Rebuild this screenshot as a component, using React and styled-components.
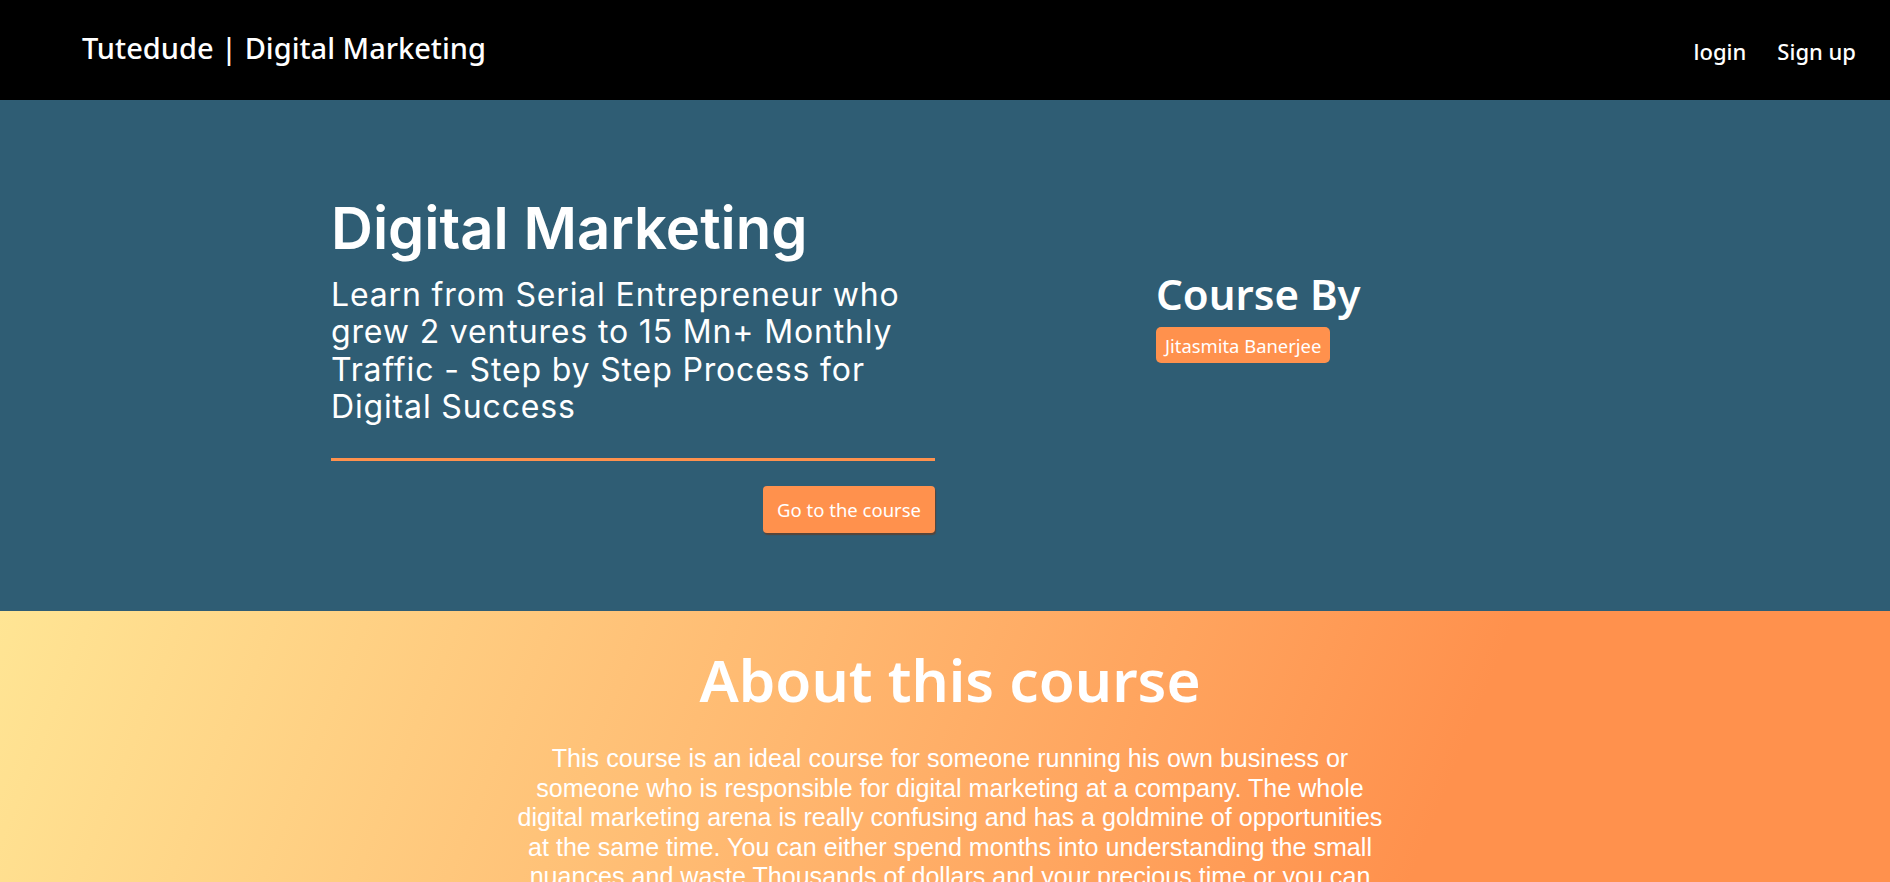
import styled, { createGlobalStyle } from "styled-components";

const GlobalStyle = createGlobalStyle`
  body {
    margin: 0;
    font-family: "Noto Sans", sans-serif;
  }
`;

const orange = "#ff914d";

export default function App() {
  return (
    <>
      <GlobalStyle />
      <Nav>
        <Brand>Tutedude | Digital Marketing</Brand>
        <Links>
          <NavLink href="#">login</NavLink>
          <NavLink href="#">Sign up</NavLink>
        </Links>
      </Nav>

      <Hero>
        <Intro>
          <Title>Digital Marketing</Title>
          <Lead>
            Learn from Serial Entrepreneur who grew 2 ventures to 15 Mn+
            Monthly Traffic - Step by Step Process for Digital Success
          </Lead>
          <Divider />
          <Actions>
            <CourseButton>Go to the course</CourseButton>
          </Actions>
        </Intro>

        <Author>
          <AuthorTitle>Course By</AuthorTitle>
          <Badge>Jitasmita Banerjee</Badge>
        </Author>
      </Hero>

      <About>
        <AboutTitle>About this course</AboutTitle>
        <AboutText>
          This course is an ideal course for someone running his own business
          or someone who is responsible for digital marketing at a company. The
          whole digital marketing arena is really confusing and has a goldmine
          of opportunities at the same time. You can either spend months into
          understanding the small nuances and waste Thousands of dollars and
          your precious time or you can learn from someone who has already done
          it and grown multiple ventures with a proven step by step process.
        </AboutText>
      </About>
    </>
  );
}

const Nav = styled.nav`
  background: #000000;
  height: 100px;
  box-sizing: border-box;
  padding: 0 34px 0 82px;
  display: flex;
  align-items: center;
  justify-content: space-between;
`;

const Brand = styled.div`
  color: #ffffff;
  font-family: "Noto Sans", sans-serif;
  font-weight: 500;
  font-size: 29px;
  margin-bottom: 6px;
`;

const Links = styled.div`
  display: flex;
  gap: 31px;
  margin-top: 2px;
`;

const NavLink = styled.a`
  color: #ffffff;
  text-decoration: none;
  font-weight: 500;
  font-size: 22px;
`;

const Hero = styled.section`
  background: #2f5d74;
  height: 511px;
  box-sizing: border-box;
  padding: 94px 0 0 331px;
  display: grid;
  grid-template-columns: 604px 1fr;
  column-gap: 221px;
  align-items: start;
`;

const Intro = styled.div`
  display: flex;
  flex-direction: column;
`;

const Title = styled.h1`
  margin: 0;
  color: #ffffff;
  font-family: Inter, sans-serif;
  font-weight: 600;
  font-size: 58px;
  line-height: 1.2;
`;

const Lead = styled.p`
  margin: 12px 0 0;
  color: #ffffff;
  font-family: Inter, sans-serif;
  font-weight: 400;
  font-size: 32px;
  letter-spacing: 0.85px;
  line-height: 37.5px;
`;

const Divider = styled.hr`
  margin: 32px 0 0;
  border: none;
  height: 3px;
  background: ${orange};
`;

const Actions = styled.div`
  display: flex;
  justify-content: flex-end;
  margin-top: 25px;
`;

const CourseButton = styled.button`
  background: ${orange};
  color: #ffffff;
  border: none;
  border-radius: 4px;
  height: 47px;
  padding: 0 14px;
  font-family: "Noto Sans", sans-serif;
  font-size: 18.5px;
  box-shadow: 1px 2px 1px rgba(120, 50, 10, 0.55);
  cursor: pointer;
`;

const Author = styled.div`
  padding-top: 75px;
  display: flex;
  flex-direction: column;
  align-items: flex-start;
`;

const AuthorTitle = styled.h2`
  margin: 0;
  color: #ffffff;
  font-weight: 600;
  font-size: 42px;
  line-height: 1.2;
`;

const Badge = styled.span`
  margin-top: 8px;
  background: ${orange};
  color: #ffffff;
  border-radius: 5px;
  height: 36px;
  padding: 0 9px;
  display: flex;
  align-items: center;
  font-size: 18.4px;
`;

const About = styled.section`
  min-height: 400px;
  background: linear-gradient(112deg, #ffe594 0%, #ffb870 40%, #ff914d 73%);
  padding: 33px 0 40px 10px;
  display: flex;
  flex-direction: column;
  align-items: center;
`;

const AboutTitle = styled.h2`
  margin: 0;
  color: #ffffff;
  font-weight: 600;
  font-size: 58.5px;
  line-height: 1.2;
`;

const AboutText = styled.p`
  margin: 30px 0 0;
  max-width: 870px;
  color: #ffffff;
  text-align: center;
  font-family: "Liberation Sans", Arial, sans-serif;
  font-size: 25.1px;
  line-height: 29.5px;
`;
